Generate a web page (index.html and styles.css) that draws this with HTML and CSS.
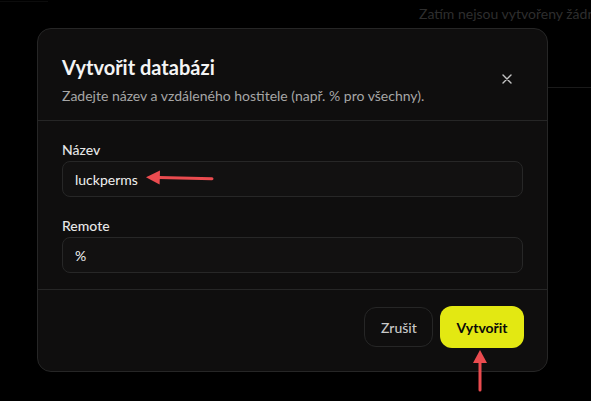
FILE: index.html
```html
<!DOCTYPE html>
<html lang="cs">
<head>
    <meta charset="UTF-8">
    <meta name="viewport" content="width=device-width, initial-scale=1.0">
    <title>Vytvořit databázi</title>
    <link rel="stylesheet" href="styles.css">
</head>
<body>
    <div class="page">
        <div class="bg-page">
            <div class="bg-top">
                <div class="bg-tab"></div>
                <p class="empty-note">Zatím nejsou vytvořeny žádné databáze.</p>
            </div>
            <div class="bg-table"></div>
        </div>

        <div class="modal" role="dialog" aria-labelledby="modalTitle">
            <div class="modal-header">
                <div class="modal-heading">
                    <h2 id="modalTitle" class="modal-title">Vytvořit databázi</h2>
                    <p class="modal-desc">Zadejte název a vzdáleného hostitele (např. % pro všechny).</p>
                </div>
                <button class="close-btn" aria-label="Zavřít">
                    <svg width="10" height="10" viewBox="0 0 10 10">
                        <path d="M1 1L9 9M9 1L1 9" stroke="#c4c4c4" stroke-width="1.4" stroke-linecap="round"/>
                    </svg>
                </button>
            </div>

            <form class="modal-body">
                <div class="form-group">
                    <label for="dbName">Název</label>
                    <input type="text" id="dbName" value="luckperms">
                </div>
                <div class="form-group">
                    <label for="dbRemote">Remote</label>
                    <input type="text" id="dbRemote" value="%">
                </div>
            </form>

            <div class="modal-footer">
                <button class="btn btn-ghost">Zrušit</button>
                <button class="btn btn-primary">Vytvořit</button>
            </div>
        </div>

        <!-- annotation arrows -->
        <svg class="arrow arrow-left" width="72" height="18" viewBox="0 0 72 18">
            <path d="M14 8.6L67 9.8" stroke="#ea4b4f" stroke-width="3" stroke-linecap="round"/>
            <path d="M1 8.3L15 1.5L14.6 15.6Z" fill="#ea4b4f"/>
        </svg>
        <svg class="arrow arrow-up" width="18" height="44" viewBox="0 0 18 44">
            <path d="M9 12L9 41" stroke="#ea4b4f" stroke-width="3" stroke-linecap="round"/>
            <path d="M9 1L16 14L2 14Z" fill="#ea4b4f"/>
        </svg>
    </div>
</body>
</html>
```

FILE: styles.css
```css
* {
    margin: 0;
    padding: 0;
    box-sizing: border-box;
}

body {
    font-family: Lato, 'Noto Sans', Arial, sans-serif;
    background: #000;
    color: #f2f2f2;
}

.page {
    position: relative;
    width: 591px;
    height: 401px;
    overflow: hidden;
}

/* dimmed page behind the dialog */
.bg-page {
    height: 100%;
}

.bg-top {
    display: flex;
    justify-content: space-between;
    align-items: flex-start;
}

.bg-tab {
    width: 48px;
    height: 2px;
    border-bottom: 1px solid #0c0c0c;
}

.empty-note {
    width: 172px;
    white-space: nowrap;
    padding-top: 5px;
    font-size: 14px;
    color: #2e2e2e;
}

.bg-table {
    margin: 65px 0 0 484px;
    border-top: 1px solid #1a1a1a;
}

.modal {
    position: absolute;
    left: 37px;
    top: 28px;
    width: 511px;
    background: #0f0e0e;
    border: 1px solid #262626;
    border-radius: 14px;
}

.modal-header {
    display: flex;
    justify-content: space-between;
    align-items: flex-start;
    padding: 24px 24px 14px;
    border-bottom: 1px solid #262626;
}

.modal-title {
    font-size: 20px;
    line-height: 28px;
    font-weight: 700;
    color: #f4f4f4;
}

.modal-desc {
    margin-top: 5px;
    font-size: 14px;
    line-height: 20px;
    color: #a6a6a6;
}

.close-btn {
    display: flex;
    align-items: center;
    justify-content: center;
    width: 20px;
    height: 20px;
    margin: 16px 6px 0 0;
    background: none;
    border: none;
    cursor: pointer;
}

.modal-body {
    display: flex;
    flex-direction: column;
    gap: 19px;
    padding: 19px 24px 16px;
    border-bottom: 1px solid #262626;
}

label {
    display: block;
    margin-bottom: 1px;
    font-size: 14px;
    line-height: 20px;
    font-weight: 500;
    color: #e6e6e6;
}

input {
    width: 100%;
    height: 36px;
    padding: 0 12px;
    background: #121111;
    border: 1px solid #272727;
    border-radius: 8px;
    font-family: inherit;
    font-size: 14px;
    color: #f0f0f0;
}

input:focus {
    outline: none;
    border-color: #3a3a3a;
}

.modal-footer {
    display: flex;
    justify-content: flex-end;
    align-items: center;
    gap: 7px;
    padding: 16px 23px 23px;
}

.btn {
    height: 40px;
    padding: 0 16px;
    border-radius: 12px;
    font-family: inherit;
    font-size: 14px;
    cursor: pointer;
}

.btn-ghost {
    width: 69px;
    background: #0f0e0e;
    border: 1px solid #262626;
    color: #c8c8c8;
    font-weight: 500;
}

.btn-primary {
    width: 84px;
    height: 42px;
    background: #e3e812;
    border: none;
    color: #0a0a0a;
    font-weight: 700;
}

.btn-primary:hover {
    background: #d4d90c;
}

.arrow {
    position: absolute;
}

.arrow-left {
    left: 145px;
    top: 169px;
}

.arrow-up {
    left: 471px;
    top: 349px;
}
```
